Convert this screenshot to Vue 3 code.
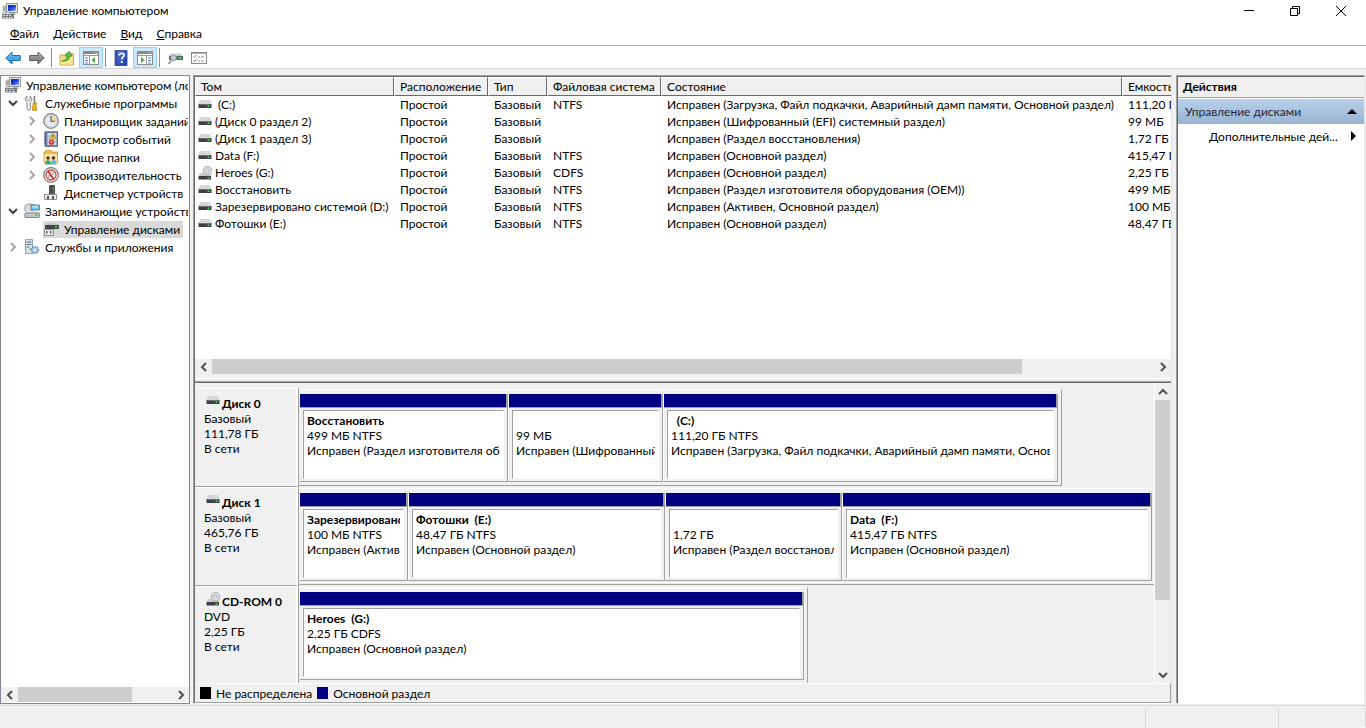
<script setup>
const menu = [['Ф', 'айл'], ['Д', 'ействие'], ['В', 'ид'], ['С', 'правка']]

const tools = [
  { icon: 'back', label: 'Назад' },
  { icon: 'forward', label: 'Вперед' },
  { sep: true },
  { icon: 'up', label: 'Вверх' },
  { icon: 'tree', label: 'Дерево консоли', on: true },
  { sep: true },
  { icon: 'help', label: 'Справка' },
  { icon: 'pane', label: 'Область действий', on: true },
  { sep: true },
  { icon: 'rescan', label: 'Повторить проверку' },
  { icon: 'props', label: 'Свойства' },
]

const tree = [
  { level: 0, icon: 'computer', text: 'Управление компьютером (локальным)' },
  { level: 1, icon: 'tools', text: 'Служебные программы', state: 'open' },
  { level: 2, icon: 'clock', text: 'Планировщик заданий', state: 'closed' },
  { level: 2, icon: 'events', text: 'Просмотр событий', state: 'closed' },
  { level: 2, icon: 'shared', text: 'Общие папки', state: 'closed' },
  { level: 2, icon: 'perf', text: 'Производительность', state: 'closed' },
  { level: 2, icon: 'device', text: 'Диспетчер устройств' },
  { level: 1, icon: 'storage', text: 'Запоминающие устройства', state: 'open' },
  { level: 2, icon: 'diskmgmt', text: 'Управление дисками', selected: true },
  { level: 1, icon: 'services', text: 'Службы и приложения', state: 'closed' },
]

const columns = ['Том', 'Расположение', 'Тип', 'Файловая система', 'Состояние', 'Емкость']
const volumes = [
  ['\u00a0(C:)', 'NTFS', 'Исправен (Загрузка, Файл подкачки, Аварийный дамп памяти, Основной раздел)', '111,20 ГБ'],
  ['(Диск 0 раздел 2)', '', 'Исправен (Шифрованный (EFI) системный раздел)', '99 МБ'],
  ['(Диск 1 раздел 3)', '', 'Исправен (Раздел восстановления)', '1,72 ГБ'],
  ['Data (F:)', 'NTFS', 'Исправен (Основной раздел)', '415,47 ГБ'],
  ['Heroes (G:)', 'CDFS', 'Исправен (Основной раздел)', '2,25 ГБ'],
  ['Восстановить', 'NTFS', 'Исправен (Раздел изготовителя оборудования (OEM))', '499 МБ'],
  ['Зарезервировано системой (D:)', 'NTFS', 'Исправен (Активен, Основной раздел)', '100 МБ'],
  ['Фотошки (E:)', 'NTFS', 'Исправен (Основной раздел)', '48,47 ГБ'],
]

const disks = [
  {
    name: 'Диск 0', kind: 'Базовый', size: '111,78 ГБ', icon: 'drive', span: 763, rest: 92,
    parts: [
      { w: 208, name: 'Восстановить', size: '499 МБ NTFS', status: 'Исправен (Раздел изготовителя оборудования (OEM))' },
      { w: 155, name: '', size: '99 МБ', status: 'Исправен (Шифрованный (EFI) системный раздел)' },
      { w: 395, name: '\u00a0\u00a0(C:)', size: '111,20 ГБ NTFS', status: 'Исправен (Загрузка, Файл подкачки, Аварийный дамп памяти, Основной раздел)' },
    ],
  },
  {
    name: 'Диск 1', kind: 'Базовый', size: '465,76 ГБ', icon: 'drive', span: 855, rest: 0,
    parts: [
      { w: 108, name: 'Зарезервировано системой\u00a0 (D:)', size: '100 МБ NTFS', status: 'Исправен (Активен, Основной раздел)' },
      { w: 257, name: 'Фотошки\u00a0 (E:)', size: '48,47 ГБ NTFS', status: 'Исправен (Основной раздел)' },
      { w: 177, name: '', size: '1,72 ГБ', status: 'Исправен (Раздел восстановления)' },
      { w: 310, name: 'Data\u00a0 (F:)', size: '415,47 ГБ NTFS', status: 'Исправен (Основной раздел)' },
    ],
  },
  {
    name: 'CD-ROM 0', kind: 'DVD', size: '2,25 ГБ', icon: 'cdrom', span: 509, rest: 346,
    parts: [
      { w: 504, name: 'Heroes\u00a0 (G:)', size: '2,25 ГБ CDFS', status: 'Исправен (Основной раздел)' },
    ],
  },
]

const spread = (d) => ({ gridTemplateColumns: `${d.span}fr ${d.rest}fr` })
const shares = (d) => ({ gridTemplateColumns: d.parts.map((p) => `minmax(0, ${p.w}fr)`).join(' ') })
</script>

<template>
  <div class="window">
    <svg class="defs" aria-hidden="true">
      <defs>
        <linearGradient id="gBlue" x1="0" y1="0" x2="0" y2="1"><stop offset="0" stop-color="#7fd0fa" /><stop offset="1" stop-color="#1283d6" /></linearGradient>
        <linearGradient id="gGray" x1="0" y1="0" x2="0" y2="1"><stop offset="0" stop-color="#b5b5b5" /><stop offset="1" stop-color="#6c6c6c" /></linearGradient>
        <linearGradient id="gScreen" x1="0" y1="0" x2="1" y2="1"><stop offset="0" stop-color="#0a1ea8" /><stop offset=".55" stop-color="#2746d8" /><stop offset="1" stop-color="#a9c3f8" /></linearGradient>
        <linearGradient id="gHelp" x1="0" y1="0" x2="1" y2="1"><stop offset="0" stop-color="#5b7de0" /><stop offset="1" stop-color="#1c3aa8" /></linearGradient>

        <symbol id="computer" viewBox="0 0 16 16">
          <rect x="4.5" y="0.5" width="11" height="9" fill="#e4e4dc" stroke="#9a9a94" />
          <rect x="6" y="2" width="8" height="6" fill="url(#gScreen)" />
          <path d="M8 10h5l1 2H7z" fill="#b8b8b0" />
          <path d="M1 3h3v8H1z" fill="#d5d5cf" stroke="#9b9b95" stroke-width=".6" />
          <path d="M1.500 5h2M1.500 7h2" stroke="#777" />
          <rect x="0" y="11" width="12" height="4.500" fill="#737b83" />
          <path d="M1 12.500h2M4 12.500h2M7 12.500h2M1 14.500h2M4 14.500h2M7 14.500h3" stroke="#d8dde2" stroke-width="1" />
        </symbol>
        <symbol id="tools" viewBox="0 0 16 16">
          <path d="M3 1v3.500L4.500 6 6 4.500V1c1.500.8 2 2 1.800 3.500S7 7 6.500 7.500V14c0 2-3.500 2-3.500 0V7.500C2 6.500 1.300 5.500 1.300 4.200S1.500 1.800 3 1z" fill="#ececec" stroke="#777" stroke-width=".8" />
          <path d="M10.500 1v7" stroke="#777" stroke-width="1.500" />
          <path d="M9 8h3.500v1.500l-1 1 1 1v3.800h-4v-3.800l1-1-.5-1z" fill="#f0b31a" stroke="#b07b08" stroke-width=".7" />
        </symbol>
        <symbol id="clock" viewBox="0 0 16 16">
          <circle cx="8" cy="8" r="7.300" fill="#f4f4f0" stroke="#7d8184" stroke-width="1.200" />
          <circle cx="8" cy="8" r="5.800" fill="#e3ebf3" stroke="#b8bcc0" stroke-width=".5" />
          <path d="M8 8V2.500A5.500 5.500 0 0 1 13.500 8z" fill="#f6d79b" />
          <path d="M8 3v5.300h4" stroke="#4b5258" fill="none" stroke-width="1.100" />
        </symbol>
        <symbol id="events" viewBox="0 0 16 16">
          <rect x="2" y=".8" width="12.500" height="14.500" fill="#7587a5" stroke="#44536e" stroke-width=".8" />
          <rect x="4.500" y="2" width="9" height="12" fill="#cfdaeb" />
          <path d="M5 5h8.500M5 8h8.500M5 11h8.500" stroke="#8fa2c0" stroke-width=".8" />
          <path d="M1 3h2M1 6h2M1 9h2M1 12h2" stroke="#555" />
          <path d="M10 2l3.200 5.200H6.800z" fill="#ffd11a" stroke="#a27e00" stroke-width=".5" />
          <path d="M10 4v2" stroke="#333" />
          <circle cx="8.500" cy="11.200" r="2.600" fill="#d22f2f" /><path d="M7.500 10.200l2 2m0-2l-2 2" stroke="#fff" stroke-width=".7" />
        </symbol>
        <symbol id="shared" viewBox="0 0 16 16">
          <path d="M1 3h1l1-1.500h5L9 3h5.500v11H1z" fill="#e9bd52" stroke="#b98c28" stroke-width=".7" />
          <path d="M1.500 5h12.500v8.500H1.500z" fill="#fae29a" />
          <circle cx="5" cy="9" r="1.700" fill="#4a3524" /><path d="M2 15.500c0-6 6-6 6 0z" fill="#36a38f" />
          <circle cx="10.500" cy="9" r="1.700" fill="#4a3524" /><path d="M8 15.500c0-6 5.500-6 5.500 0z" fill="#58b3e6" />
        </symbol>
        <symbol id="perf" viewBox="0 0 16 16">
          <circle cx="8" cy="8" r="7.300" fill="#f5f5f5" stroke="#777" stroke-width="1.200" />
          <circle cx="8" cy="8" r="5" fill="#fff" stroke="#cf4b42" stroke-width="1.300" />
          <path d="M5 4l5.500 8" stroke="#d32020" stroke-width="1.700" /><path d="M6 8v3M10 5v3" stroke="#777" stroke-width="1" />
        </symbol>
        <symbol id="device" viewBox="0 0 16 16">
          <path d="M6 1l1-1h5v9H6z" fill="#4a4d50" /><path d="M10.500 1v8" stroke="#666" /><rect x="9.500" y="3" width="1.500" height="1.500" fill="#39e03c" />
          <path d="M1.500 9.500h12v5h-12z" fill="#eee" stroke="#8b8b8b" />
          <path d="M4 11h2v3H4zM9 11h2v3H9z" fill="#555" />
        </symbol>
        <symbol id="storage" viewBox="0 0 16 16">
          <path d="M1 3l3-2h5v7H1z" fill="#c4c8cc" stroke="#888" stroke-width=".6" />
          <circle cx="4.500" cy="5" r="3.600" fill="#e6ecf0" stroke="#8f969c" stroke-width=".8" /><circle cx="4.500" cy="5" r="1.200" fill="#fff" stroke="#999" stroke-width=".6" />
          <path d="M7 2h8.500v5H7z" fill="#68c6ed" stroke="#4a7e96" stroke-width=".8" /><path d="M8 3h6v1.500H8z" fill="#bbebfb" />
          <path d="M1 10l1.500-2h12L16 10z" fill="#e2e2e2" /><rect x=".8" y="10" width="14.700" height="4.500" rx=".8" fill="#c4c7ca" stroke="#6e7274" stroke-width=".8" />
          <rect x="11" y="11.500" width="2.500" height="1.500" fill="#27dd33" />
        </symbol>
        <symbol id="diskmgmt" viewBox="0 0 16 16">
          <path d="M3 4l1.500-1.500h10L16 4z" fill="#c4c4c4" /><rect x="2" y="4" width="14" height="4" fill="#45484a" /><rect x="12" y="5" width="2" height="1.500" fill="#4ee14d" />
          <path d="M1.500 8.500h9v6h-9z" fill="#ececec" stroke="#909090" /><path d="M3 10h1.500v2.500H3zM7 10h1.500v2.500H7z" fill="#555" />
        </symbol>
        <symbol id="services" viewBox="0 0 16 16">
          <path d="M1.500 .5h7v14h-7z" fill="#dce3ea" stroke="#93a0ac" /><path d="M2.500 3h5M2.500 5.500h5M2.500 8h3" stroke="#5d6b78" /><rect x="5.500" y="9.500" width="1.500" height="1.500" fill="#3dbb45" />
          <circle cx="11" cy="11" r="3.300" fill="#b8d1ea" stroke="#6b8fb4" stroke-width="1.800" stroke-dasharray="1.400 .7" /><circle cx="11" cy="11" r="2.600" fill="#a9c8e5" /><circle cx="11" cy="11" r="1.100" fill="#fff" />
        </symbol>
        <symbol id="drive" viewBox="0 0 14 14">
          <path d="M2 2h10l1.500 4H.5z" fill="#d5d7da" /><rect x=".5" y="6" width="13" height="4" fill="#3d4043" /><path d="M.5 6.500h13" stroke="#6d7073" /><rect x="9.500" y="7.500" width="2" height="1.500" fill="#28f044" />
        </symbol>
        <symbol id="cdrom" viewBox="0 0 14 14">
          <path d="M2 7h10.500l1 3H.5z" fill="#c9cbce" /><circle cx="9.500" cy="4.700" r="4.200" fill="#dfe2e2" stroke="#9ea2a3" stroke-width=".9" /><circle cx="9.500" cy="4.700" r="1.500" fill="#fff" stroke="#8c9091" stroke-width=".8" /><rect x=".5" y="10" width="12.500" height="3.500" fill="#3d4043" /><rect x="9.500" y="11" width="2" height="1.500" fill="#28f044" />
        </symbol>
        <symbol id="back" viewBox="0 0 16 16"><path d="M.7 8L7 2v3.500h8.300v5H7V14z" fill="url(#gBlue)" stroke="#0f66ab" stroke-width=".9" /></symbol>
        <symbol id="forward" viewBox="0 0 16 16"><path d="M15.300 8L9 2v3.500H.7v5H9V14z" fill="url(#gGray)" stroke="#555" stroke-width=".9" /></symbol>
        <symbol id="up" viewBox="0 0 16 16">
          <path d="M1 5h5l1-1.500h7.500V15H1z" fill="#f4d783" stroke="#c29a3b" stroke-width=".8" /><path d="M9.500 7h4.500v7.500H1.500V12z" fill="#fbe08e" />
          <path d="M3 11c3-.5 5-2 5.300-5H6l4-4.700L13 6h-2.200C10.500 9.500 8 11.700 3 11z" fill="#50c83a" stroke="#25861a" stroke-width=".7" />
        </symbol>
        <symbol id="tree" viewBox="0 0 16 16">
          <rect x=".5" y="1.500" width="15" height="13" fill="#fff" stroke="#8a8a8a" /><path d="M1 3h14" stroke="#858585" stroke-width="2" /><path d="M11 3h1M13 3h1" stroke="#fff" /><path d="M1 5.500h14M6.500 5.500v9" stroke="#999" />
          <path d="M2 8h3M2 10.500h3M2 13h3" stroke="#5283bd" /><path d="M12 7v6L8.500 10z" fill="#3eaf36" />
        </symbol>
        <symbol id="pane" viewBox="0 0 16 16">
          <rect x=".5" y="1.500" width="15" height="13" fill="#fff" stroke="#8a8a8a" /><path d="M1 3h14" stroke="#858585" stroke-width="2" /><path d="M11 3h1M13 3h1" stroke="#fff" /><path d="M1 5.500h14M9.500 5.500v9" stroke="#999" />
          <path d="M11 8h3M11 10.500h3M11 13h3" stroke="#5283bd" /><path d="M4 7v6l3.500-3z" fill="#3eaf36" />
        </symbol>
        <symbol id="help" viewBox="0 0 16 16">
          <path d="M2 .5h12v15H2z" fill="url(#gHelp)" stroke="#243f98" stroke-width=".8" /><path d="M3.500 1v14" stroke="#2845a5" />
          <path d="M6.200 5.500c.2-3 5.300-2.800 4.800.1-.2 1.400-2.200 1.600-2.200 3.800" fill="none" stroke="#fff" stroke-width="1.700" /><rect x="7.800" y="11" width="2" height="2" fill="#fff" />
        </symbol>
        <symbol id="rescan" viewBox="0 0 16 16">
          <path d="M1.500 6L3 3.500h11L16 6z" fill="#cfd1d4" /><rect x="2" y="6" width="14" height="4" fill="#606568" /><rect x="11.500" y="7" width="3" height="2" fill="#29d937" />
          <circle cx="6.500" cy="8" r="2.800" fill="#b9cddb" stroke="#8798a4" /><path d="M4.500 10.500L1.500 14" stroke="#888" stroke-width="1.700" />
        </symbol>
        <symbol id="props" viewBox="0 0 16 16">
          <rect x=".5" y="2.500" width="15" height="11" fill="#fff" stroke="#858a90" /><path d="M1 3.500h14" stroke="#aeb3b8" />
          <path d="M2.500 6.500l1 1L5.500 5M2.500 10.500l1 1L5.500 9" stroke="#3c8bd4" fill="none" /><path d="M7 7h2M10 7h3M7 11h2M10 11h3" stroke="#8b9298" />
        </symbol>
        <symbol id="chevron" viewBox="0 0 10 10"><path d="M3 1l4 4-4 4" fill="none" stroke="currentColor" stroke-width="2" /></symbol>
      </defs>
    </svg>

    <header class="titlebar">
      <svg class="i16"><use href="#computer" /></svg>
      <h1>Управление компьютером</h1>
      <div class="caption">
        <button aria-label="Свернуть"><svg class="i12" viewBox="0 0 12 12"><path d="M1 5.500h10" stroke="#000" /></svg></button>
        <button aria-label="Свернуть в окно"><svg class="i12" viewBox="0 0 12 12"><path d="M1.500 3.500h7v7h-7zM3.500 3.500v-2h7v7h-2" fill="none" stroke="#000" /></svg></button>
        <button aria-label="Закрыть"><svg class="i12" viewBox="0 0 12 12"><path d="M1 1l10 10M11 1L1 11" stroke="#000" /></svg></button>
      </div>
    </header>

    <nav class="menubar">
      <button v-for="m in menu" :key="m[1]"><u>{{ m[0] }}</u>{{ m[1] }}</button>
    </nav>

    <div class="toolbar">
      <template v-for="(t, i) in tools" :key="i">
        <span v-if="t.sep" class="sep"></span>
        <button v-else :class="{ on: t.on }" :aria-label="t.label"><svg class="i16"><use :href="'#' + t.icon" /></svg></button>
      </template>
    </div>

    <main class="main">
      <aside class="tree">
        <ul>
          <li v-for="n in tree" :key="n.text" :class="['node', 'level' + n.level, { selected: n.selected }]">
            <button v-if="n.state" :class="['expander', n.state]" :aria-label="n.text"><svg class="i10"><use href="#chevron" /></svg></button>
            <span v-else-if="n.level" class="expander"></span>
            <span class="node-body"><svg class="i16"><use :href="'#' + n.icon" /></svg><span class="node-text">{{ n.text }}</span></span>
          </li>
        </ul>
        <div class="hscroll">
          <button class="left" aria-label="Влево"><svg class="i10"><use href="#chevron" /></svg></button>
          <div class="track"><div class="thumb tree-thumb"></div></div>
          <button aria-label="Вправо"><svg class="i10"><use href="#chevron" /></svg></button>
        </div>
      </aside>

      <section class="center">
        <div class="volumes">
          <table>
            <colgroup><col class="c-name"><col class="c-layout"><col class="c-type"><col class="c-fs"><col class="c-state"><col class="c-size"></colgroup>
            <thead><tr><th v-for="c in columns" :key="c">{{ c }}</th></tr></thead>
            <tbody>
              <tr v-for="v in volumes" :key="v[0]">
                <td class="name"><svg class="i14"><use :href="v[1] === 'CDFS' ? '#cdrom' : '#drive'" /></svg>{{ v[0] }}</td>
                <td>Простой</td><td>Базовый</td><td>{{ v[1] }}</td><td>{{ v[2] }}</td><td>{{ v[3] }}</td>
              </tr>
            </tbody>
          </table>
        </div>
        <div class="hscroll">
          <button class="left" aria-label="Влево"><svg class="i10"><use href="#chevron" /></svg></button>
          <div class="track"><div class="thumb list-thumb"></div></div>
          <button aria-label="Вправо"><svg class="i10"><use href="#chevron" /></svg></button>
        </div>
        <div class="splitter"></div>

        <div class="disks">
          <div class="disk-list">
            <article v-for="d in disks" :key="d.name" class="disk">
              <div class="disk-label">
                <h2><svg class="i14"><use :href="'#' + d.icon" /></svg>{{ d.name }}</h2>
                <p>{{ d.kind }}</p><p>{{ d.size }}</p><p>В сети</p>
              </div>
              <div class="disk-map" :style="spread(d)">
                <div :class="['frame', { full: !d.rest }]" :style="shares(d)">
                  <div v-for="p in d.parts" :key="p.size" class="part">
                    <div class="bar"></div>
                    <div class="info">
                      <h3>{{ p.name }}</h3><p>{{ p.size }}</p><p>{{ p.status }}</p>
                    </div>
                  </div>
                </div>
              </div>
            </article>
          </div>
          <div class="vscroll">
            <button class="up" aria-label="Вверх"><svg class="i10"><use href="#chevron" /></svg></button>
            <div class="vtrack"><div class="vthumb"></div></div>
            <button class="down" aria-label="Вниз"><svg class="i10"><use href="#chevron" /></svg></button>
          </div>
        </div>

        <div class="legend">
          <span class="swatch free"></span><span>Не распределена</span>
          <span class="swatch primary"></span><span>Основной раздел</span>
        </div>
      </section>

      <aside class="actions">
        <h2>Действия</h2>
        <button class="group"><span>Управление дисками</span><svg class="i10" viewBox="0 0 10 10"><path d="M0 7h10L5 2z" /></svg></button>
        <button class="more"><span>Дополнительные дей...</span><svg class="i10" viewBox="0 0 10 10"><path d="M4 0v10l5-5z" /></svg></button>
      </aside>
    </main>

    <footer class="status"><span></span><span class="mid"></span><span class="end"></span></footer>
  </div>
</template>

<style>
body { background: #f0f0f0; }
</style>

<style scoped>
.window {
  display: flex; flex-direction: column; min-height: 100vh; overflow: hidden;
  background: #f0f0f0; color: #000;
  font: 12px/15px Lato, "Open Sans", "Noto Sans", sans-serif;
}
.window * { box-sizing: border-box; }
h1, h2, h3, p, ul { margin: 0; padding: 0; font-size: 12px; font-weight: 400; }
ul { list-style: none; }
button { border: 0; padding: 0; margin: 0; background: none; font: inherit; color: inherit; }
svg { display: block; flex: none; }
.defs { position: absolute; width: 0; height: 0; }
.i16 { width: 16px; height: 16px; }
.i14 { width: 14px; height: 14px; }
.i12 { width: 12px; height: 12px; }
.i10 { width: 10px; height: 10px; }

.titlebar { display: flex; align-items: center; gap: 5px; height: 23px; padding: 0 2px 2px; background: #fff; }
.caption { display: flex; margin-left: auto; }
.caption button { display: flex; align-items: center; justify-content: center; width: 46px; height: 21px; }
.menubar { display: flex; gap: 14px; height: 23px; padding: 0 0 1px 10px; background: #fff; border-bottom: 1px solid #b0b0b0; }
.toolbar { display: flex; height: 23px; padding: 1px 0 0 1px; background: #fff; border-bottom: 1px solid #d8d8d8; }
.toolbar button { display: flex; align-items: center; justify-content: center; width: 24px; height: 21px; }
.toolbar .on { background: #cce8ff; border: 1px solid #99d1ff; }
.sep { width: 6px; margin: 1px 0; background: linear-gradient(#8c8c8c, #8c8c8c) 2px 0 / 1px 100% no-repeat; }

.main { display: grid; grid-template-columns: 190px minmax(0, 1fr) 189px; flex: 1; padding: 6px 0 1px; }
.tree { display: flex; flex-direction: column; min-width: 0; padding-bottom: 1px; background: #fff; border: 1px solid #828790; overflow: hidden; }
.tree ul { flex: 1; margin-right: 1px; overflow: hidden; }
.node { display: flex; align-items: center; height: 18px; white-space: nowrap; }
.level0 { padding-left: 4px; }
.level1 { padding-left: 5px; }
.level2 { padding-left: 24px; }
.expander { display: flex; align-items: center; justify-content: center; width: 14px; height: 18px; margin-right: 4px; flex: none; color: #a6a6a6; }
.open { color: #404040; }
.open svg { transform: rotate(90deg); }
.node-body { display: flex; align-items: center; gap: 5px; height: 17px; padding-right: 3px; }
.selected .node-body { background: #d9d9d9; }
.hscroll { display: flex; align-items: center; height: 15px; background: #f0f0f0; color: #505050; }
.hscroll button { display: flex; align-items: center; justify-content: center; width: 17px; height: 15px; }
.left svg { transform: scaleX(-1); }
.track { flex: 1; height: 15px; }
.thumb { height: 15px; background: #cdcdcd; }
.tree-thumb { width: 74%; }
.list-thumb { width: 86%; }

.center { display: flex; flex-direction: column; min-width: 0; margin: 0 5px 0 3px; border: 1px solid #a0a0a0; border-right-color: #e3e3e3; border-bottom-color: #fff; box-shadow: inset 1px 1px #696969; padding: 1px 0 0 1px; }
.volumes { flex: 1; background: #fff; overflow: hidden; }
table { width: 1007px; min-width: 100%; border-collapse: separate; border-spacing: 0; table-layout: fixed; }
.c-name { width: 199px; } .c-layout { width: 94px; } .c-type { width: 59px; }
.c-fs { width: 114px; } .c-state { width: 461px; } .c-size { width: 80px; }
th { height: 19px; padding: 0 0 0 5px; text-align: left; font-weight: 400; background: #f0f0f0; border: 1px solid; border-color: #fff #696969 #696969 #fff; white-space: nowrap; line-height: 17px; }
td { height: 17px; padding: 0 0 0 6px; line-height: 17px; white-space: nowrap; overflow: hidden; }
.name { display: flex; align-items: center; gap: 3px; padding-left: 3px; }
.splitter { height: 9px; border-bottom: 1px solid #696969; background: linear-gradient(#f0f0f0 4px, #fff 4px, #fff 5px, #f0f0f0 5px, #f0f0f0 7px, #a0a0a0 7px); }

.disks { display: flex; height: 300px; overflow: hidden; }
.disk-list { flex: 1; min-width: 0; padding-top: 5px; border-right: 1px solid #fff; }
.disk { display: flex; height: 99px; }
.disk-label { width: 103px; flex: none; padding: 7px 0 0 9px; border-top: 1px solid #fff; border-bottom: 1px solid #a0a0a0; border-right: 2px solid #fff; }
.disk-label h2 { display: flex; gap: 2px; padding-left: 2px; font-weight: 700; height: 15px; white-space: nowrap; }
.disk-label h2 svg { margin-top: -2px; }
.disk-map { display: grid; flex: 1; min-width: 0; border-left: 1px solid #a0a0a0; }
.frame { display: grid; min-width: 0; margin: 1px 0; padding: 4px 3px 3px 1px; border: 1px solid; border-color: #fff #a0a0a0 #a0a0a0 #f0f0f0; border-left: 0; }
.full { border-right: 0; padding-right: 2px; }
.part { display: flex; flex-direction: column; min-width: 0; border-right: 1px solid #a0a0a0; border-bottom: 1px solid #a0a0a0; }
.part + .part { border-left: 1px solid #fff; }
.bar { height: 14px; background: #000080; border-right: 1px solid #a0a0a0; border-bottom: 1px solid #a0a0a0; }
.info { flex: 1; margin: 2px 3px; padding: 2px 3px 0; background: #fff; border: 1px solid; border-color: #a0a0a0 #fff #fff #a0a0a0; }
.info h3, .info p { height: 15px; overflow: hidden; white-space: nowrap; }
.info h3 { font-weight: 700; }
.vscroll { display: flex; flex-direction: column; width: 16px; color: #505050; }
.vscroll button { display: flex; align-items: center; justify-content: center; height: 17px; }
.up svg { transform: rotate(-90deg); }
.down svg { transform: rotate(90deg); }
.vtrack { flex: 1; }
.vthumb { width: 15px; height: 75%; background: #cdcdcd; }
.legend { display: flex; align-items: center; gap: 5px; height: 20px; padding-left: 4px; border: 1px solid; border-color: #fff #a0a0a0 #a0a0a0 #f0f0f0; }
.swatch { width: 11px; height: 12px; }
.free { background: #000; }
.primary { background: #000080; }

.actions { margin-right: 1px; margin-left: -1px; background: #fff; border: 1px solid #a0a0a0; border-right-color: #e3e3e3; border-bottom-color: #fff; box-shadow: inset 1px 1px #696969; padding: 1px 0 0 1px; }
.actions h2 { height: 21px; padding-left: 5px; background: #f0f0f0; border-bottom: 1px solid #a0a0a0; font-weight: 700; line-height: 20px; }
.actions button { display: flex; align-items: center; justify-content: space-between; width: 100%; height: 24px; padding: 0 7px; white-space: nowrap; }
.actions .group { height: 25px; margin-top: 1px; background: linear-gradient(#b9d1ea, #99b4d1); color: #1e1e3c; }
.actions .group svg { color: #000; }
.actions .more { padding-left: 31px; }

.status { display: grid; grid-template-columns: 1fr 133px 87px; height: 23px; border-top: 1px solid #d7d7d7; }
.status span { margin: 2px 0 1px; border-right: 1px solid #d7d7d7; }
</style>
